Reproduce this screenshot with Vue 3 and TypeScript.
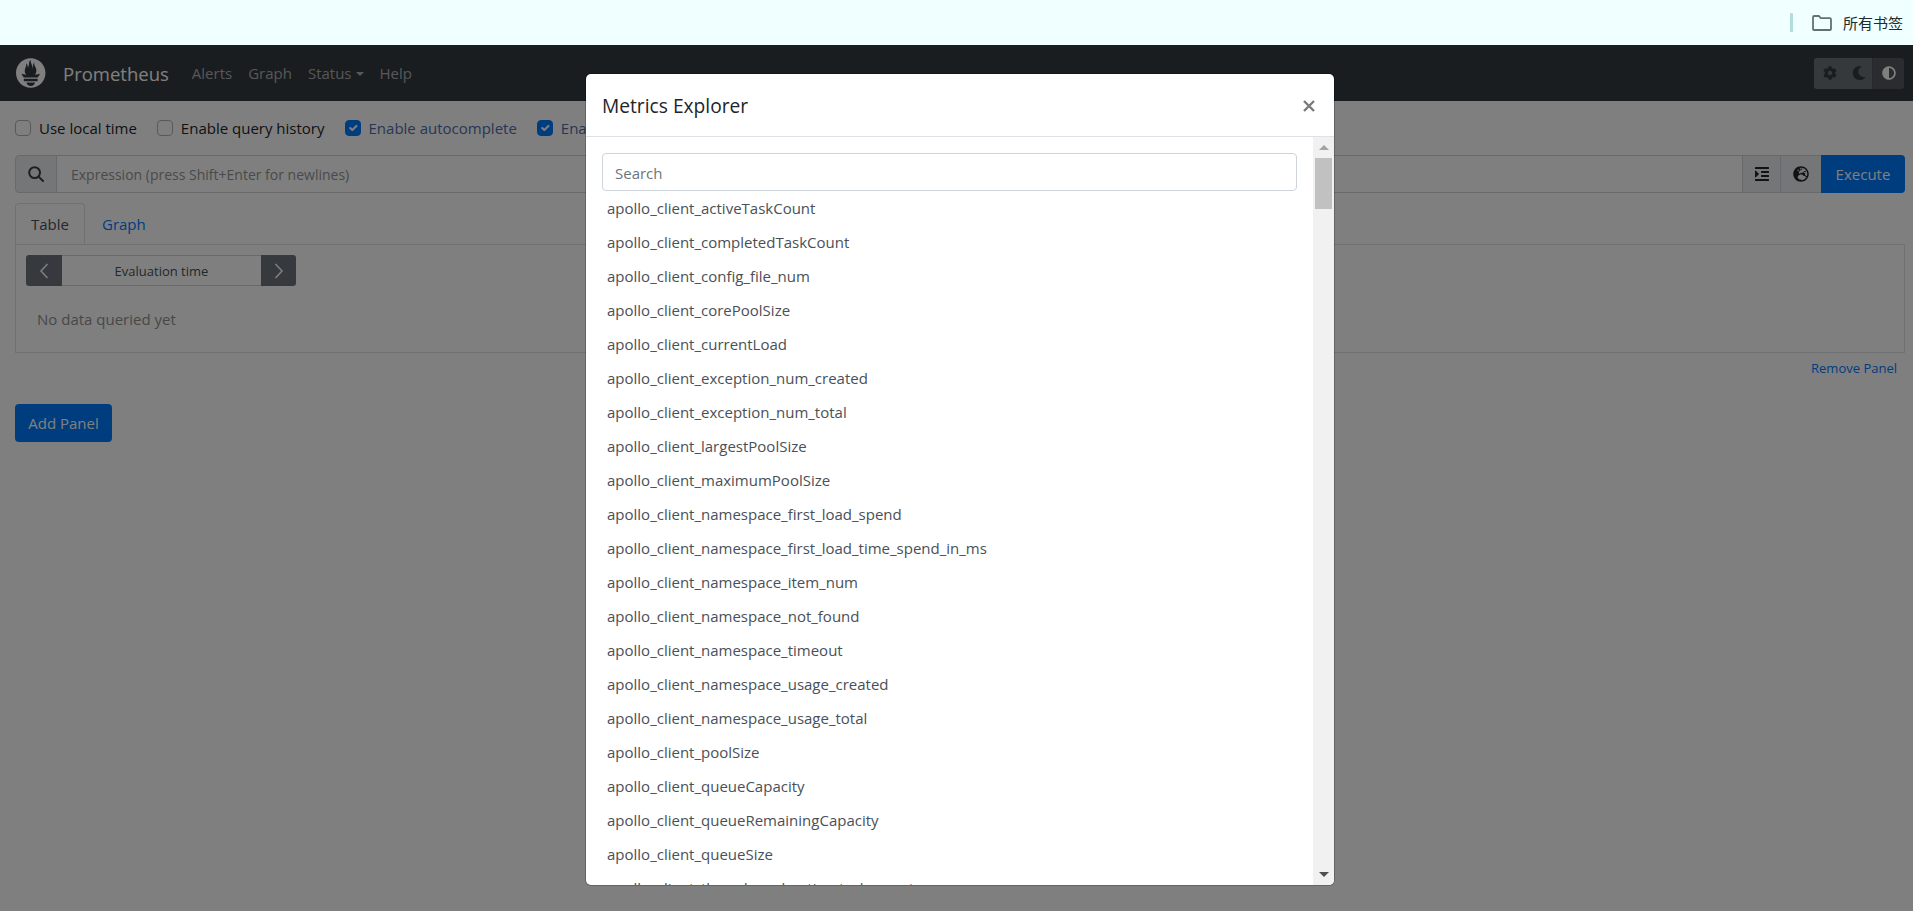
<script setup lang="ts">
const metrics: string[] = [
  'apollo_client_activeTaskCount',
  'apollo_client_completedTaskCount',
  'apollo_client_config_file_num',
  'apollo_client_corePoolSize',
  'apollo_client_currentLoad',
  'apollo_client_exception_num_created',
  'apollo_client_exception_num_total',
  'apollo_client_largestPoolSize',
  'apollo_client_maximumPoolSize',
  'apollo_client_namespace_first_load_spend',
  'apollo_client_namespace_first_load_time_spend_in_ms',
  'apollo_client_namespace_item_num',
  'apollo_client_namespace_not_found',
  'apollo_client_namespace_timeout',
  'apollo_client_namespace_usage_created',
  'apollo_client_namespace_usage_total',
  'apollo_client_poolSize',
  'apollo_client_queueCapacity',
  'apollo_client_queueRemainingCapacity',
  'apollo_client_queueSize',
  'apollo_client_thread_pool_active_task_count',
]
</script>

<template>
  <div class="root">
    <header class="bookmarks">
      <span class="divider"></span>
      <svg class="folder" viewBox="0 0 20 16" fill="none" stroke="#5f7370" stroke-width="1.8"><path d="M1 14V2.2C1 1.5 1.5 1 2.2 1h4.6l2 2.2h9c.7 0 1.2.5 1.2 1.2V14c0 .6-.5 1-1.1 1H2c-.6 0-1-.4-1-1z"/></svg>
      <span class="bookmarks-label">所有书签</span>
    </header>

    <div class="page">
      <nav class="navbar">
        <svg class="logo" viewBox="0 0 115.333 114"><path d="M56.667,0.667C25.372,0.667,0,26.036,0,57.332c0,31.295,25.372,56.666,56.667,56.666s56.666-25.371,56.666-56.666C113.333,26.036,87.961,0.667,56.667,0.667z M56.667,106.722c-8.904,0-16.123-5.948-16.123-13.283H72.79C72.79,100.773,65.571,106.722,56.667,106.722z M83.297,89.04H30.034v-9.658h53.264V89.04z M83.106,74.411h-52.92c-0.176-0.203-0.356-0.403-0.526-0.609c-5.452-6.62-6.736-10.076-7.983-13.598c-0.021-0.116,6.611,1.355,11.314,2.413c0,0,2.42,0.56,5.958,1.205c-3.397-3.982-5.414-9.044-5.414-14.218c0-11.359,8.712-21.285,5.569-29.308c3.059,0.249,6.331,6.456,6.552,16.161c3.252-4.494,4.613-12.701,4.613-17.733c0-5.21,3.433-11.262,6.867-11.469c-3.061,5.045,0.793,9.37,4.219,20.099c1.285,4.03,1.121,10.812,2.113,15.113C63.797,33.534,65.333,20.5,71,16c-2.5,5.667,0.37,12.758,2.333,16.167c3.167,5.5,5.087,9.667,5.087,17.548c0,5.284-1.951,10.259-5.242,14.148c3.742-0.702,6.326-1.335,6.326-1.335l12.152-2.371C91.657,60.156,89.891,67.418,83.106,74.411z"/></svg>
        <a class="brand">Prometheus</a>
        <a class="nav-link">Alerts</a>
        <a class="nav-link">Graph</a>
        <a class="nav-link">Status<i class="caret"></i></a>
        <a class="nav-link">Help</a>
        <div class="theme">
          <span class="theme-btn light gear">
            <svg viewBox="0 0 512 512"><path d="M487.4 315.7l-42.6-24.6c4.3-23.2 4.3-47 0-70.2l42.6-24.6c4.9-2.8 7.1-8.6 5.5-14-11.1-35.6-30-67.8-54.7-94.6-3.8-4.1-10-5.1-14.8-2.3L380.8 110c-17.9-15.4-38.5-27.3-60.8-35.1V25.8c0-5.6-3.9-10.5-9.4-11.7-36.7-8.2-74.3-7.8-109.2 0-5.5 1.2-9.4 6.1-9.4 11.7V75c-22.2 7.9-42.8 19.8-60.8 35.1L88.7 85.5c-4.9-2.8-11-1.9-14.8 2.3-24.7 26.7-43.6 58.9-54.7 94.6-1.7 5.4.6 11.2 5.5 14L67.3 221c-4.3 23.2-4.3 47 0 70.2l-42.6 24.6c-4.9 2.8-7.1 8.6-5.5 14 11.1 35.6 30 67.8 54.7 94.6 3.8 4.1 10 5.1 14.8 2.3l42.6-24.6c17.9 15.4 38.5 27.3 60.8 35.1v49.2c0 5.6 3.9 10.5 9.4 11.7 36.7 8.2 74.3 7.8 109.2 0 5.5-1.2 9.4-6.1 9.4-11.7v-49.2c22.2-7.9 42.8-19.8 60.8-35.1l42.6 24.6c4.9 2.8 11 1.9 14.8-2.3 24.7-26.7 43.6-58.9 54.7-94.6 1.5-5.5-.7-11.3-5.6-14.1zM256 336c-44.1 0-80-35.9-80-80s35.9-80 80-80 80 35.9 80 80-35.9 80-80 80z"/></svg>
          </span>
          <span class="theme-btn light moon">
            <svg viewBox="0 0 512 512"><path d="M283.211 512c78.962 0 151.079-35.925 198.857-94.792 7.068-8.708-.639-21.43-11.562-19.35-124.203 23.654-238.262-71.576-238.262-196.954 0-72.222 38.662-138.635 101.498-174.394 9.686-5.512 7.25-20.197-3.756-22.23A258.156 258.156 0 0 0 283.211 0c-141.309 0-256 114.511-256 256 0 141.309 114.511 256 256 256z"/></svg>
          </span>
          <span class="theme-btn dark">
            <svg viewBox="0 0 512 512"><path d="M8 256c0 136.966 111.033 248 248 248s248-111.034 248-248S392.966 8 256 8 8 119.033 8 256zm248 184V72c101.705 0 184 82.311 184 184 0 101.705-82.311 184-184 184z"/></svg>
          </span>
        </div>
      </nav>

      <main class="content">
        <div class="options">
          <label class="option"><i class="check"></i><span>Use local time</span></label>
          <label class="option"><i class="check"></i><span>Enable query history</span></label>
          <label class="option on"><i class="check"><svg viewBox="0 0 20 20"><path fill="none" stroke="#fff" stroke-linecap="round" stroke-linejoin="round" stroke-width="3" d="M6 10l3 3 6-6"/></svg></i><span>Enable autocomplete</span></label>
          <label class="option on"><i class="check"><svg viewBox="0 0 20 20"><path fill="none" stroke="#fff" stroke-linecap="round" stroke-linejoin="round" stroke-width="3" d="M6 10l3 3 6-6"/></svg></i><span>Enable highlighting</span></label>
        </div>

        <div class="query">
          <span class="query-icon">
            <svg viewBox="0 0 16 16"><circle cx="6.6" cy="6.6" r="5.4"/><path d="M10.6 10.6L15 15"/></svg>
          </span>
          <div class="query-input">Expression (press Shift+Enter for newlines)</div>
          <span class="query-tool first">
            <svg viewBox="0 0 448 512"><path d="M27.31 363.3l96-96a16 16 0 0 0 0-22.62l-96-96C17.27 138.66 0 145.78 0 160v192c0 14.31 17.33 21.3 27.31 11.3zM432 416H16a16 16 0 0 0-16 16v32a16 16 0 0 0 16 16h416a16 16 0 0 0 16-16v-32a16 16 0 0 0-16-16zm3.17-128H204.83A12.82 12.82 0 0 0 192 300.83v38.34A12.82 12.82 0 0 0 204.83 352h230.34A12.82 12.82 0 0 0 448 339.17v-38.34A12.82 12.82 0 0 0 435.17 288zm0-128H204.83A12.82 12.82 0 0 0 192 172.83v38.34A12.82 12.82 0 0 0 204.83 224h230.34A12.82 12.82 0 0 0 448 211.17v-38.34A12.82 12.82 0 0 0 435.17 160zM432 32H16A16 16 0 0 0 0 48v32a16 16 0 0 0 16 16h416a16 16 0 0 0 16-16V48a16 16 0 0 0-16-16z"/></svg>
          </span>
          <span class="query-tool second">
            <svg viewBox="0 0 496 512"><path d="M248 8C111 8 0 119 0 256s111 248 248 248 248-111 248-248S385 8 248 8zm200 248c0 22.5-3.9 44.2-10.8 64.4h-20.3c-4.3 0-8.4-1.7-11.4-4.8l-32-32.6c-4.5-4.6-4.5-12.1.1-16.7l12.5-12.5v-8.7c0-3-1.2-5.9-3.3-8l-9.4-9.4c-2.1-2.1-5-3.3-8-3.3h-16c-6.2 0-11.3-5.1-11.3-11.3 0-3 1.2-5.9 3.3-8l9.4-9.4c2.1-2.1 5-3.3 8-3.3h32c6.2 0 11.3-5.1 11.3-11.3v-9.4c0-6.2-5.1-11.3-11.3-11.3h-36.7c-8.8 0-16 7.2-16 16v4.5c0 6.9-4.4 13-10.9 15.2l-31.6 10.5c-3.3 1.1-5.5 4.1-5.5 7.6v2.2c0 4.4-3.6 8-8 8h-16c-4.4 0-8-3.6-8-8s-3.6-8-8-8H247c-3 0-5.8 1.7-7.2 4.4l-9.4 18.7c-2.7 5.4-8.2 8.8-14.3 8.8H194c-8.8 0-16-7.2-16-16V199c0-4.2 1.7-8.3 4.7-11.3l20.1-20.1c4.6-4.6 7.2-10.9 7.2-17.5 0-3.4 2.2-6.5 5.5-7.6l40-13.3c1.7-.6 3.2-1.5 4.4-2.7l26.8-26.8c2.1-2.1 3.3-5 3.3-8 0-6.2-5.1-11.3-11.3-11.3H258l-16 16v8c0 4.4-3.6 8-8 8h-16c-4.4 0-8-3.6-8-8v-20c0-2.5 1.2-4.9 3.2-6.4l28.9-21.7c1.9-.1 3.8-.3 5.7-.3C358.3 56 448 145.7 448 256zM130.1 149.1c0-3 1.2-5.9 3.3-8l25.4-25.4c2.1-2.1 5-3.3 8-3.3 6.2 0 11.3 5.1 11.3 11.3v16c0 3-1.2 5.9-3.3 8l-9.4 9.4c-2.1 2.1-5 3.3-8 3.3h-16c-6.2 0-11.3-5.1-11.3-11.3zm128 306.4v-7.1c0-8.8-7.2-16-16-16h-20.2c-10.8 0-26.7-5.3-35.4-11.8l-22.2-16.7c-11.5-8.6-18.2-22.1-18.2-36.4v-23.9c0-16 8.4-30.8 22.1-39l42.9-25.7c7.1-4.2 15.2-6.5 23.4-6.5h31.2c10.9 0 21.4 3.9 29.6 10.9l43.2 37.1h18.3c8.5 0 16.6 3.4 22.6 9.4l17.3 17.3c3.4 3.4 8.1 5.3 12.9 5.3H423c-32.4 58.9-93.8 99.5-164.9 103.1z"/></svg>
          </span>
          <button class="btn-primary execute">Execute</button>
        </div>

        <div class="tabs">
          <span class="tab active">Table</span>
          <span class="tab">Graph</span>
        </div>
        <section class="panel">
          <div class="eval">
            <span class="eval-btn left"><svg viewBox="0 0 12 20"><path d="M9.5 3L3 10l6.5 7" /></svg></span>
            <span class="eval-input">Evaluation time</span>
            <span class="eval-btn right"><svg viewBox="0 0 12 20"><path d="M2.5 3L9 10l-6.5 7" /></svg></span>
          </div>
          <p class="empty">No data queried yet</p>
        </section>
        <div class="remove"><a>Remove Panel</a></div>
        <button class="btn-primary add">Add Panel</button>
      </main>

      <div class="backdrop"></div>

      <div class="modal">
        <div class="modal-header">
          <h5>Metrics Explorer</h5>
          <svg class="close" viewBox="0 0 12 12"><path d="M1 1l10 10M11 1L1 11"/></svg>
        </div>
        <div class="modal-body">
          <div class="modal-scroll">
            <div class="search">Search</div>
            <ul>
              <li v-for="m in metrics" :key="m">{{ m }}</li>
            </ul>
          </div>
          <div class="scrollbar">
            <i class="arrow up"></i>
            <i class="thumb"></i>
            <i class="arrow down"></i>
          </div>
        </div>
      </div>
    </div>
  </div>
</template>

<style>
html, body { margin: 0; background: #fff; overflow: hidden; }
</style>

<style scoped>
.root {
  width: 1913px;
  height: 911px;
  overflow: hidden;
  font-family: "Open Sans", "Noto Sans", sans-serif;
  font-size: 15px;
  color: #212529;
  display: flex;
  flex-direction: column;
}
.bookmarks {
  height: 45px;
  flex: none;
  background: #f0ffff;
  display: flex;
  justify-content: flex-end;
  align-items: center;
  padding-right: 10px;
  box-sizing: border-box;
}
.divider { width: 3px; height: 19px; background: #b3dddb; border-radius: 1px; margin-right: 19px; }
.folder { width: 20px; height: 16px; margin-right: 11px; }
.bookmarks-label { font-family: "Noto Sans CJK SC", sans-serif; font-size: 15px; color: #1d2b2e; }

.page { flex: 1; position: relative; overflow: hidden; }

.navbar {
  height: 56px;
  background: #343a40;
  display: flex;
  align-items: center;
  padding: 0 9px 0 16px;
  box-sizing: border-box;
}
.logo { width: 30px; height: 30px; fill: #fff; margin-right: 17px; flex: none; }
.brand { font-size: 18.5px; color: #fff; margin-right: 23px; }
.nav-link { color: rgba(255, 255, 255, .6); margin-right: 16px; }
.caret {
  display: inline-block;
  margin-left: 4px;
  vertical-align: 3px;
  border-top: 4px solid currentColor;
  border-left: 4px solid transparent;
  border-right: 4px solid transparent;
}
.theme { margin-left: auto; display: flex; height: 31px; border-radius: 3px; overflow: hidden; }
.theme-btn { display: flex; align-items: center; justify-content: center; }
.theme-btn svg { width: 14px; height: 14px; }
.theme-btn.light { background: #6c7278; }
.theme-btn.gear { width: 32px; }
.theme-btn.moon { width: 26px; }
.theme-btn.light svg { fill: #343a40; }
.theme-btn.dark { background: #54585e; width: 32px; border-left: 1px solid #4d5359; box-sizing: border-box; }
.theme-btn.dark svg { fill: #fff; }

.content { padding: 0 8px 0 15px; }
.options { display: flex; height: 54px; align-items: center; }
.option { display: flex; align-items: center; margin-right: 20px; }
.check {
  width: 16px;
  height: 16px;
  box-sizing: border-box;
  border: 1px solid #adb5bd;
  border-radius: 4px;
  background: #fff;
  margin-right: 8px;
  display: flex;
}
.option.on { color: #506eaa; }
.option.on .check { background: #007bff; border-color: #007bff; }
.check svg { width: 100%; height: 100%; }

.query { display: flex; height: 38px; margin-bottom: 10px; }
.query-icon {
  width: 42px;
  box-sizing: border-box;
  background: #e9ecef;
  border: 1px solid #ced4da;
  border-radius: 4px 0 0 4px;
  display: flex;
  align-items: center;
  justify-content: center;
}
.query-icon svg { width: 16px; height: 16px; fill: none; stroke: #3a3f44; stroke-width: 2; stroke-linecap: round; }
.query-input {
  flex: 1;
  border-top: 1px solid #ced4da;
  border-bottom: 1px solid #ced4da;
  background: #fff;
  color: #949494;
  font-size: 14px;
  padding-left: 14px;
  display: flex;
  align-items: center;
}
.query-tool {
  background: #e9ecef;
  border: 1px solid #ced4da;
  border-right: 0;
  box-sizing: border-box;
  display: flex;
  align-items: center;
  justify-content: center;
}
.query-tool svg { width: 16px; height: 16px; fill: #212529; }
.query-tool.first { width: 38px; }
.query-tool.second { width: 41px; }

.btn-primary {
  border: 0;
  background: #007bff;
  color: #fff;
  font-family: inherit;
  font-size: 15px;
  padding: 0;
}
.execute { width: 84px; border-radius: 0 4px 4px 0; }
.add { display: block; width: 97px; height: 38px; border-radius: 4px; margin-top: 25px; }

.tabs { display: flex; height: 41px; }
.tab { color: #007bff; padding: 0 17px; display: flex; align-items: center; }
.tab.active {
  color: #495057;
  background: #fff;
  border: 1px solid #dee2e6;
  border-bottom: 0;
  border-radius: 4px 4px 0 0;
  padding: 0 15px;
}
.panel { border: 1px solid #dee2e6; height: 109px; box-sizing: border-box; padding: 10px; }
.eval { display: flex; height: 31px; width: 270px; }
.eval-btn { width: 36px; background: #6c757d; display: flex; align-items: center; justify-content: center; }
.eval-btn.left { border-radius: 3px 0 0 3px; }
.eval-btn.right { width: 35px; border-radius: 0 3px 3px 0; }
.eval-btn svg { width: 12px; height: 20px; fill: none; stroke: #fff; stroke-width: 1.5; }
.eval-input {
  flex: 1;
  border-top: 1px solid #ced4da;
  border-bottom: 1px solid #ced4da;
  font-size: 13px;
  color: #495057;
  display: flex;
  align-items: center;
  justify-content: center;
}
.empty { margin: 21px 0 0 11px; line-height: 24px; color: #909090; }
.remove { padding: 4px 8px 0 0; box-sizing: border-box; height: 26px; display: flex; justify-content: flex-end; align-items: center; font-size: 13px; color: #007bff; }

.backdrop { position: absolute; inset: 0; background: rgba(0, 0, 0, .5); }
.modal {
  position: absolute;
  left: 586px;
  top: 29px;
  width: 748px;
  height: 811px;
  background: #fff;
  border-radius: 5px;
  overflow: hidden;
  display: flex;
  flex-direction: column;
  box-shadow: 0 0 0 1px rgba(0, 0, 0, .2);
}
.modal-header {
  height: 63px;
  flex: none;
  box-sizing: border-box;
  border-bottom: 1px solid #dee2e6;
  display: flex;
  align-items: center;
  justify-content: space-between;
  padding: 1px 19px 0 16px;
}
.modal-header h5 { margin: 0; font-size: 19.2px; font-weight: 500; color: #212529; }
.close { width: 12px; height: 12px; fill: none; stroke: #7a7a7a; stroke-width: 2.4; }
.modal-body { flex: 1; display: flex; min-height: 0; }
.modal-scroll { flex: 1; padding: 16px 16px 0; overflow: hidden; min-width: 0; }
.search {
  height: 38px;
  box-sizing: border-box;
  border: 1px solid #ced4da;
  border-radius: 4px;
  color: #6c757d;
  padding: 2px 0 0 12px;
  display: flex;
  align-items: center;
}
ul { list-style: none; margin: 0; padding: 0; }
li { height: 34px; line-height: 34px; padding-left: 5px; color: #495057; white-space: nowrap; }
.scrollbar {
  width: 21px;
  flex: none;
  background: #f1f1f1;
  display: flex;
  flex-direction: column;
  align-items: center;
}
.arrow { width: 0; height: 0; border-left: 5px solid transparent; border-right: 5px solid transparent; flex: none; }
.arrow.up { border-bottom: 5px solid #a3a3a3; margin-top: 8px; }
.arrow.down { border-top: 5px solid #505050; margin-top: auto; margin-bottom: 8px; }
.thumb { width: 17px; height: 51px; background: #c1c1c1; margin-top: 8px; flex: none; }
</style>
